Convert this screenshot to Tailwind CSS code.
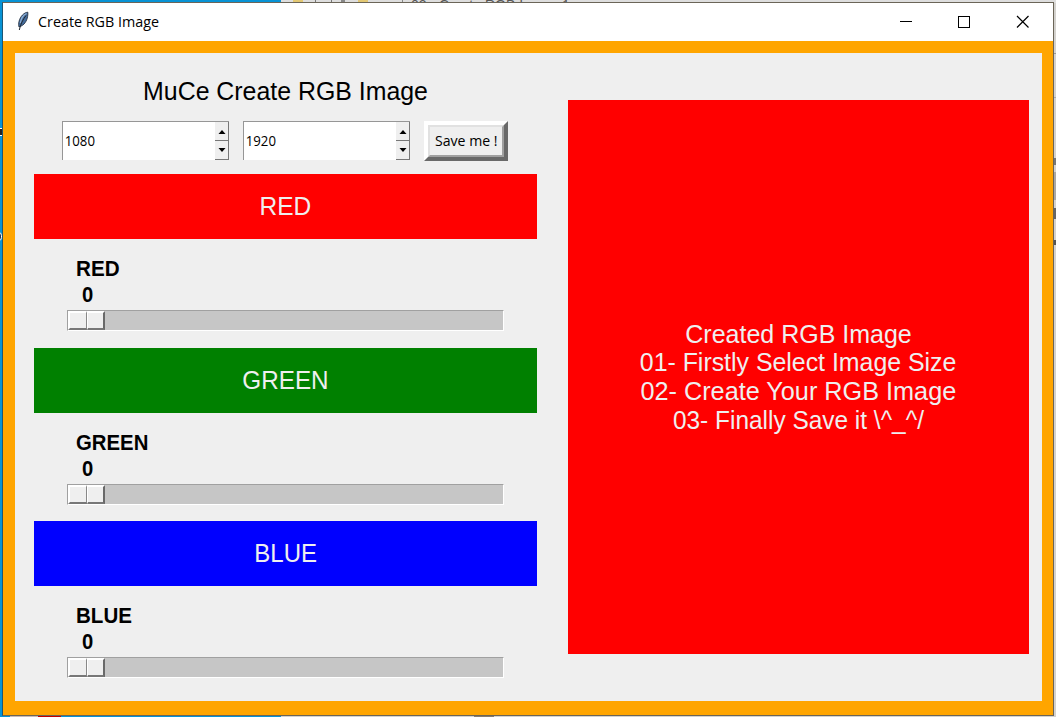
<!DOCTYPE html>
<html lang="en">
<head>
<meta charset="utf-8">
<title>Create RGB Image</title>
<script src="https://cdn.jsdelivr.net/npm/@tailwindcss/browser@4"></script>
</head>
<body class="relative w-[1056px] h-[717px] overflow-hidden bg-[#d4d2ce] font-['Liberation_Sans',sans-serif] text-black">
<!-- desktop behind the window -->
<div class="absolute left-0 top-0 w-[281px] h-[717px] bg-[#0793d5]"></div>
<div class="absolute left-[281px] top-0 w-[775px] h-[3px] overflow-hidden bg-[#dedede]">
  <div class="absolute left-[12px] top-0 w-[10px] h-[2px] bg-[#e3c873]"></div>
  <div class="absolute left-[34px] top-0 w-px h-[3px] bg-[#777]"></div>
  <div class="absolute left-[50px] top-0 w-px h-[3px] bg-[#777]"></div>
  <div class="absolute left-[60px] top-0 w-[4px] h-[2px] bg-[#888]"></div>
  <div class="absolute left-[77px] top-0 w-[10px] h-[2px] bg-[#e3c873]"></div>
  <div class="absolute left-[121px] top-0 w-px h-[3px] bg-[#888]"></div>
  <div class="absolute left-[130px] top-[-1px] text-[14px] leading-[13px] whitespace-nowrap text-[#555]">02 - Create RGB Image 1</div>
</div>
<div class="absolute left-[10px] top-[715px] w-[28px] h-[2px] bg-[#c9b9b5]"></div>
<div class="absolute left-[38px] top-[715px] w-[23px] h-[2px] bg-[#c40000]"></div>
<div class="absolute left-[474px] top-[715px] w-[20px] h-[2px] bg-[#877c6e]"></div>
<div class="absolute left-[-5px] top-[128px] w-[8px] h-[8px] border border-white bg-[#222]"></div>
<div class="absolute left-[-5px] top-[232px] w-[7px] h-[9px] rounded-full border border-white bg-[#223a55]"></div>
<div class="absolute left-[1054px] top-[53px] w-[2px] h-px bg-[#999]"></div>
<div class="absolute left-[1054px] top-[97px] w-[2px] h-px bg-[#aaa]"></div>
<div class="absolute left-[1054px] top-[158px] w-[2px] h-[7px] bg-[#777]"></div>
<div class="absolute left-[1054px] top-[172px] w-[2px] h-[28px] bg-[#aaa8a4]"></div>
<div class="absolute left-[1054px] top-[208px] w-[2px] h-[11px] bg-[#666]"></div>
<div class="absolute left-[1054px] top-[240px] w-[2px] h-[5px] bg-[#555]"></div>

<main class="absolute left-[2px] top-[2px] w-[1052px] h-[714px] flex flex-col border border-[#6b6558] border-l-[#1c5674]">
  <header class="h-[38px] shrink-0 flex items-center bg-white">
    <svg class="ml-[12px] w-[16px] h-[22px]" viewBox="0 0 16 22">
      <path d="M12.800 1.200C9 1.500 5.200 5.400 4 10.500c-.5 2.200-.5 3.900 0 5.500l1-.6c4-.8 7-5.600 7.600-9.900.3-1.700.4-3.100.2-4.300z" fill="#456d9c" stroke="#182333" stroke-width=".8"/>
      <path d="M11.500 2.500C8 4 6 8 5.300 12" fill="none" stroke="#91b2d8" stroke-width="1.300"/>
      <path d="M11 4.500C8 8.500 5.500 13 4.300 19" fill="none" stroke="#20262e" stroke-width="1"/>
    </svg>
    <h1 class="ml-[7px] -mt-[2px] font-['Open_Sans',sans-serif] text-[15px] leading-[20px] whitespace-nowrap origin-left scale-x-[.955]">Create RGB Image</h1>
    <svg class="ml-auto w-[174px] h-[38px]" viewBox="0 0 174 38" fill="none" stroke="#000" stroke-width="1">
      <path d="M21 18.500h12" shape-rendering="crispEdges"/>
      <path d="M79.500 13.500h11v11h-11z" shape-rendering="crispEdges"/>
      <path d="M138 13l11.500 11.500M149.500 13L138 24.500" stroke-width="1.200"/>
    </svg>
  </header>
  <div class="h-[674px] shrink-0 pt-[12px] pb-[14px] pl-[12px] pr-[11px] bg-[#ffa500]">
    <div class="h-full flex bg-[#efefef]">
      <section class="w-[503px] ml-[19px] shrink-0 flex flex-col">
        <h2 class="mt-[23px] h-[30px] text-center text-[25px] leading-[30px] scale-x-[.995]">MuCe Create RGB Image</h2>
        <div class="mt-[15px] ml-[28px] h-[40px] flex font-['Open_Sans',sans-serif] text-[15px]">
          <div class="w-[167px] h-[39px] flex bg-white border-t border-l border-[#969696]">
            <span class="flex-1 pl-[2px] leading-[36px] origin-left scale-x-[.88]">1080</span>
            <svg class="w-[14px] h-[38px]" viewBox="0 0 14 38"><path d="M0 0h14v38H0z" fill="#efefef"/><path d="M0 18.500h14M0 37.500h14M13.500 0v38" stroke="#777" fill="none"/><path d="M3.500 12l3.500-4 3.500 4zM3.500 26h7l-3.500 4z" fill="#000"/></svg>
          </div>
          <div class="ml-[14px] w-[167px] h-[39px] flex bg-white border-t border-l border-[#969696]">
            <span class="flex-1 pl-[2px] leading-[36px] origin-left scale-x-[.88]">1920</span>
            <svg class="w-[14px] h-[38px]" viewBox="0 0 14 38"><path d="M0 0h14v38H0z" fill="#efefef"/><path d="M0 18.500h14M0 37.500h14M13.500 0v38" stroke="#777" fill="none"/><path d="M3.500 12l3.500-4 3.500 4zM3.500 26h7l-3.500 4z" fill="#000"/></svg>
          </div>
          <button class="ml-[14px] w-[84px] h-[40px] border-4 border-t-white border-l-white border-b-[#696969] border-r-[#696969]">
            <span class="flex w-full h-full items-center justify-center border-2 border-t-[#e1e1e1] border-l-[#e1e1e1] border-b-[#a0a0a0] border-r-[#a0a0a0] bg-[#efefef]"><span class="-mt-[2px] whitespace-nowrap scale-x-[.94]">Save me !</span></span>
          </button>
        </div>

        <div class="mt-[13px] h-[65px] bg-[#ff0000] text-center text-[25px] leading-[65px] text-[#efefef]"><span class="inline-block scale-x-[.98]">RED</span></div>
        <div class="h-[109px] pt-[17px] font-bold text-[21.300px]">
          <p class="ml-[42px] h-[26px] leading-[26px] origin-left scale-x-[.97]">RED</p>
          <p class="ml-[48px] h-[27px] leading-[27px] origin-left scale-x-[.95]">0</p>
          <div class="mt-[1px] ml-[33px] w-[437px] h-[21px] flex bg-[#c6c6c6] border border-[#a0a0a0] border-b-white border-r-white">
            <div class="w-[19px] bg-[#efefef] border-t-2 border-l-2 border-white border-b-2 border-b-[#777] border-r border-r-[#888]"></div>
            <div class="w-[18px] bg-[#efefef] border-t-2 border-l border-white border-b-2 border-b-[#777] border-r-2 border-r-[#696969]"></div>
          </div>
        </div>

        <div class="h-[65px] bg-[#008000] text-center text-[25px] leading-[65px] text-[#efefef]"><span class="inline-block scale-x-[.97]">GREEN</span></div>
        <div class="h-[108px] pt-[17px] font-bold text-[21.300px]">
          <p class="ml-[42px] h-[26px] leading-[26px] origin-left scale-x-[.955]">GREEN</p>
          <p class="ml-[48px] h-[27px] leading-[27px] origin-left scale-x-[.95]">0</p>
          <div class="mt-[1px] ml-[33px] w-[437px] h-[21px] flex bg-[#c6c6c6] border border-[#a0a0a0] border-b-white border-r-white">
            <div class="w-[19px] bg-[#efefef] border-t-2 border-l-2 border-white border-b-2 border-b-[#777] border-r border-r-[#888]"></div>
            <div class="w-[18px] bg-[#efefef] border-t-2 border-l border-white border-b-2 border-b-[#777] border-r-2 border-r-[#696969]"></div>
          </div>
        </div>

        <div class="h-[65px] bg-[#0000ff] text-center text-[25px] leading-[65px] text-[#efefef]"><span class="inline-block scale-x-[.96]">BLUE</span></div>
        <div class="h-[109px] pt-[17px] font-bold text-[21.300px]">
          <p class="ml-[42px] h-[26px] leading-[26px] origin-left scale-x-[.965]">BLUE</p>
          <p class="ml-[48px] h-[27px] leading-[27px] origin-left scale-x-[.95]">0</p>
          <div class="mt-[1px] ml-[33px] w-[437px] h-[21px] flex bg-[#c6c6c6] border border-[#a0a0a0] border-b-white border-r-white">
            <div class="w-[19px] bg-[#efefef] border-t-2 border-l-2 border-white border-b-2 border-b-[#777] border-r border-r-[#888]"></div>
            <div class="w-[18px] bg-[#efefef] border-t-2 border-l border-white border-b-2 border-b-[#777] border-r-2 border-r-[#696969]"></div>
          </div>
        </div>
      </section>
      <section class="mt-[47px] ml-[31px] w-[461px] h-[554px] shrink-0 flex flex-col items-center justify-center bg-[#ff0000] text-[25px] leading-[28.700px] text-[#efefef] whitespace-nowrap">
        <p>Created RGB Image</p>
        <p class="scale-x-[.995]">01- Firstly Select Image Size</p>
        <p class="scale-x-[1.010]">02- Create Your RGB Image</p>
        <p class="scale-x-[.977]">03- Finally Save it \^_^/</p>
      </section>
    </div>
  </div>
</main>
</body>
</html>
